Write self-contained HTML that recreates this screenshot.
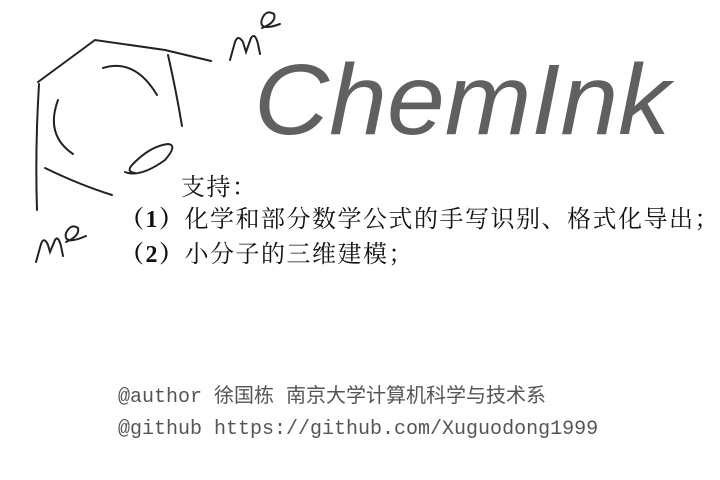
<!DOCTYPE html>
<html><head><meta charset="utf-8"><style>
html,body{margin:0;padding:0;background:#fff;}
body{width:720px;height:480px;position:relative;overflow:hidden;}
.t{position:absolute;white-space:nowrap;}
.cn{font-family:"Liberation Serif","Noto Serif CJK SC","Noto Sans CJK SC",serif;font-size:24px;color:#111;line-height:1;letter-spacing:1.5px;}
.ft{font-family:"Liberation Mono","Noto Sans CJK SC",monospace;font-size:20px;color:#555;line-height:1;}
</style></head><body>
<svg width="720" height="480" style="position:absolute;left:0;top:0" fill="none" stroke="#222" stroke-width="2" stroke-linecap="round">
<path d="M38 82 L95 40 L165 50 L211 61"/>
<path d="M168 55 Q176 90 182 126"/>
<path d="M39 84 Q35 150 37 210"/>
<path d="M45 168 Q80 185 112 195"/>
<path d="M103 68 Q135 58 157 95"/>
<path d="M58 100 Q45 135 73 154"/>
<path d="M125 172 Q140 178 165 160 Q178 145 168 144 Q150 146 132 165 Q126 172 135 173"/>
<path d="M230 60 L235 42 Q238 34 243 42 L246 52 L251 38 Q255 32 258 44 L260 54"/>
<path d="M262 28 Q277 22 274 14 Q266 9 262 19 Q258 32 280 24"/>
<path d="M36 262 L41 244 Q44 236 48 245 L50 252 L55 240 Q58 235 61 246 L63 256"/>
<path d="M66 242 Q80 236 78 228 Q71 223 66 233 Q63 246 86 236"/>
</svg>
<div class="t" style="left:254px;top:50px;font-family:'Liberation Sans',sans-serif;font-style:italic;font-size:100px;color:#606060;line-height:1;transform:scaleX(1.04);transform-origin:left top;">ChemInk</div>
<div class="t cn" style="left:181px;top:176px;">支持：</div>
<div class="t cn" style="left:120px;top:208px;"><b>（1）</b>化学和部分数学公式的手写识别、格式化导出；</div>
<div class="t cn" style="left:120px;top:243px;"><b>（2）</b>小分子的三维建模；</div>
<div class="t ft" style="left:118px;top:388px;">@author 徐国栋 南京大学计算机科学与技术系</div>
<div class="t ft" style="left:118px;top:420px;">@github https://github.com/Xuguodong1999</div>
</body></html>
